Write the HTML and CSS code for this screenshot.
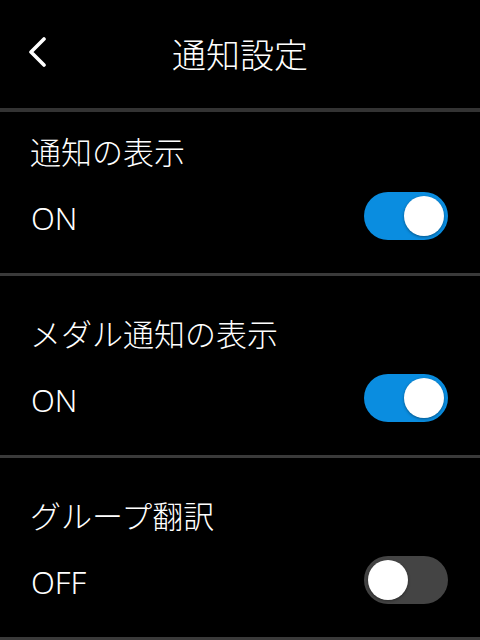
FILE: index.html
```
<!DOCTYPE html>
<html lang="ja">
<head>
  <meta charset="UTF-8">
  <title>通知設定</title>
  <link rel="stylesheet" href="styles.css">
</head>
<body>

  <div class="header">
    <div class="back">
      <svg width="20" height="30" viewBox="0 0 20 30">
        <path d="M17 2 L4 15 L17 28" fill="none" stroke="#fff" stroke-width="3.6" stroke-linecap="round" stroke-linejoin="round"/>
      </svg>
    </div>
    <h1>通知設定</h1>
    <div></div>
  </div>

  <div class="item first">
    <div class="label">通知の表示</div>
    <div class="row">
      <span class="state">ON</span>
      <div class="switch on"><div class="knob"></div></div>
    </div>
  </div>

  <div class="item">
    <div class="label">メダル通知の表示</div>
    <div class="row">
      <span class="state">ON</span>
      <div class="switch on"><div class="knob"></div></div>
    </div>
  </div>

  <div class="item">
    <div class="label">グループ翻訳</div>
    <div class="row">
      <span class="state">OFF</span>
      <div class="switch"><div class="knob"></div></div>
    </div>
  </div>

</body>
</html>
```

FILE: styles.css
```
body {
  margin: 0;
  background-color: #000;
  color: #fff;
  font-family: "Noto Sans", "Noto Sans CJK JP", sans-serif;
  font-weight: 300;
}

.header {
  display: grid;
  grid-template-columns: 1fr auto 1fr;
  align-items: center;
  height: 112px;
  border-bottom: 4px solid #333;
  box-sizing: border-box;
}

.back {
  padding-left: 27px;
  padding-bottom: 4px;
  display: flex;
}

.header h1 {
  margin: 0;
  font-family: "Noto Sans CJK JP", sans-serif;
  font-weight: 300;
  font-size: 34px;
  line-height: 40px;
}

.item {
  padding: 37px 32px 33px 30px;
  border-bottom: 3px solid #3a3a3a;
}

.item.first {
  padding-top: 19px;
}

.label {
  font-family: "Noto Sans CJK JP", sans-serif;
  font-size: 31px;
  line-height: 40px;
  margin-bottom: 21px;
}

.row {
  display: flex;
  justify-content: space-between;
  align-items: center;
}

.state {
  font-size: 31px;
  line-height: 40px;
  padding-top: 4px;
  padding-left: 1px;
}

.switch {
  width: 84px;
  height: 48px;
  box-sizing: border-box;
  padding: 4px;
  border-radius: 24px;
  background-color: #444;
  display: flex;
}

.switch.on {
  background-color: #0a8de0;
  justify-content: flex-end;
}

.knob {
  width: 40px;
  height: 40px;
  border-radius: 50%;
  background-color: #fff;
  box-shadow: 0 1px 3px rgba(0, 0, 0, 0.4);
}
```
